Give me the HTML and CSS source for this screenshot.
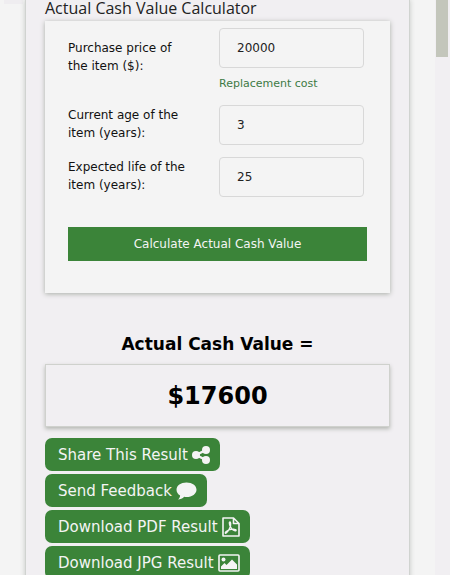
FILE: index.html
```html
<!DOCTYPE html>
<html lang="en">
<head>
    <meta charset="UTF-8">
    <meta name="viewport" content="width=device-width, initial-scale=1.0">
    <title>Actual Cash Value Calculator</title>
    <link rel="stylesheet" href="styles.css">
</head>
<body>
    <div class="page">
        <div class="side"></div>
        <main class="container">
            <h1>Actual Cash Value Calculator</h1>
            <form class="card" id="acvForm">
                <div class="row">
                    <label for="price">Purchase price of the item ($):</label>
                    <div class="field">
                        <input type="text" id="price" value="20000">
                        <a class="hint" href="#">Replacement cost</a>
                    </div>
                </div>
                <div class="row">
                    <label for="age">Current age of the item (years):</label>
                    <div class="field"><input type="text" id="age" value="3"></div>
                </div>
                <div class="row">
                    <label for="life">Expected life of the item (years):</label>
                    <div class="field"><input type="text" id="life" value="25"></div>
                </div>
                <button type="submit" class="calculate">Calculate Actual Cash Value</button>
            </form>

            <h2>Actual Cash Value =</h2>
            <output class="result" id="result" for="price age life">$17600</output>

            <div class="actions">
                <button type="button" class="action">Share This Result
                    <svg width="18" height="18" viewBox="0 0 18 18" fill="currentColor">
                        <circle cx="4" cy="9" r="4"/>
                        <circle cx="14" cy="4" r="4"/>
                        <circle cx="14" cy="14" r="4"/>
                        <path d="M14 4L4 9l10 5" fill="none" stroke="currentColor" stroke-width="2.500"/>
                    </svg>
                </button>
                <button type="button" class="action">Send Feedback
                    <svg width="21" height="18" viewBox="0 0 21 18" fill="currentColor">
                        <path d="M10.500 0.500C16.200 0.500 20.500 3.600 20.500 7.700S16.200 15 10.500 15c-.8 0-1.600-.1-2.300-.2C6.500 16.500 4.300 17.500 2 17.500c1.300-1.100 2-2.300 2.100-4C1.900 12.200 .5 10.200 .5 7.700.5 3.600 4.800.5 10.500.5z"/>
                    </svg>
                </button>
                <button type="button" class="action">Download PDF Result
                    <svg width="18" height="20" viewBox="0 0 18 20" fill="none" stroke="currentColor" stroke-width="1.600" stroke-linejoin="round">
                        <path d="M1 1h10.500L17 6.500V19H1zM11.500 1v5.500H17"/>
                        <path d="M8 5c-1 0-.7 2.200 0 4 .9 2.300 2.300 4 4.500 4.700 1.500.4 2.300-.5 1-1.100-2-.8-6.500 0-8.700 1.400-1.900 1.100-1.900 2.700-.8 2.200C5.800 15.300 9.300 9 8.700 6.300 8.600 5.500 8.400 5 8 5z" stroke-width="1.300"/>
                    </svg>
                </button>
                <button type="button" class="action">Download JPG Result
                    <svg width="22" height="18" viewBox="0 0 22 18" fill="currentColor">
                        <rect x="1" y="1" width="20" height="16" rx="1" fill="none" stroke="currentColor" stroke-width="1.600"/>
                        <circle cx="5.500" cy="5.500" r="2"/>
                        <path d="M3 15v-2.500l3.500-3.500 2 2L14 5.500l5 5V15z"/>
                    </svg>
                </button>
            </div>
        </main>
        <div class="scrollbar"><div class="thumb"></div></div>
    </div>

    <script>
        document.getElementById('acvForm').onsubmit = function(event) {
            event.preventDefault();
            const price = Number(document.getElementById('price').value);
            const age = Number(document.getElementById('age').value);
            const life = Number(document.getElementById('life').value);
            document.getElementById('result').value = '$' + Math.round(price * (life - age) / life);
        };
    </script>
</body>
</html>
```
FILE: styles.css
```css
* { box-sizing: border-box; }
body { margin: 0; background: #f4f4f4; color: #111; font-family: "DejaVu Sans", Verdana, sans-serif; font-size: 12px; }
.page { display: flex; height: 100vh; overflow: hidden; }
.side { width: 25px; }
.side::before { content: ""; display: block; height: 4px; margin: 0 2px 0 4px; background: #efedf0; }
.container { flex: 1; align-self: flex-start; margin-right: 25px; padding: 0 19px 20px; background: #f1eff2; border: 1px solid #d0d3d0; border-top: 0; box-shadow: 0 0 5px #c4c8c4; }
h1 { margin: 0 0 4px; font: 16px/17px "Open Sans", sans-serif; color: #222; }
.card { padding: 7px 23px 32px; background: #f4f4f4; box-shadow: 0 1px 5px #a9ada7; }
.row { display: flex; align-items: flex-start; margin-bottom: 12px; }
label { width: 125px; margin-right: 26px; padding-top: 11px; line-height: 18px; }
.row + .row label { padding-top: 1px; }
.field { flex: 1; margin-right: 3px; }
input { display: block; width: 100%; height: 40px; padding: 0 17px; border: 1px solid #d8d8d8; border-radius: 4px; background: #f4f4f4; color: #222; font: inherit; }
.hint { display: block; padding: 7px 0 1px; line-height: 17px; font-size: 11px; color: #3d7a45; text-decoration: none; }
.calculate { display: block; width: 100%; height: 34px; margin-top: 30px; border: 0; background: #3b8439; color: #f4f4f4; font: inherit; }
h2 { margin: 41px 0 9px; text-align: center; font-size: 17px; line-height: 21px; color: #000; }
.result { display: block; padding-top: 1px; border: 1px solid #cfd1cd; box-shadow: 0 2px 4px #b5b8b2; text-align: center; font-size: 24px; font-weight: bold; line-height: 60px; color: #000; }
.actions { display: flex; flex-direction: column; align-items: flex-start; gap: 3px; margin-top: 11px; }
.action { display: flex; align-items: center; gap: 4px; height: 33px; padding: 0 10px 0 13px; border: 0; border-radius: 7px; background: #3b8439; color: #f4f4f4; font: inherit; font-size: 15px; }
button { cursor: pointer; }
.scrollbar { width: 15px; padding: 0 2px 0 1px; background: #f1eff2; }
.thumb { height: 57px; background: #c3c6bb; }
```
